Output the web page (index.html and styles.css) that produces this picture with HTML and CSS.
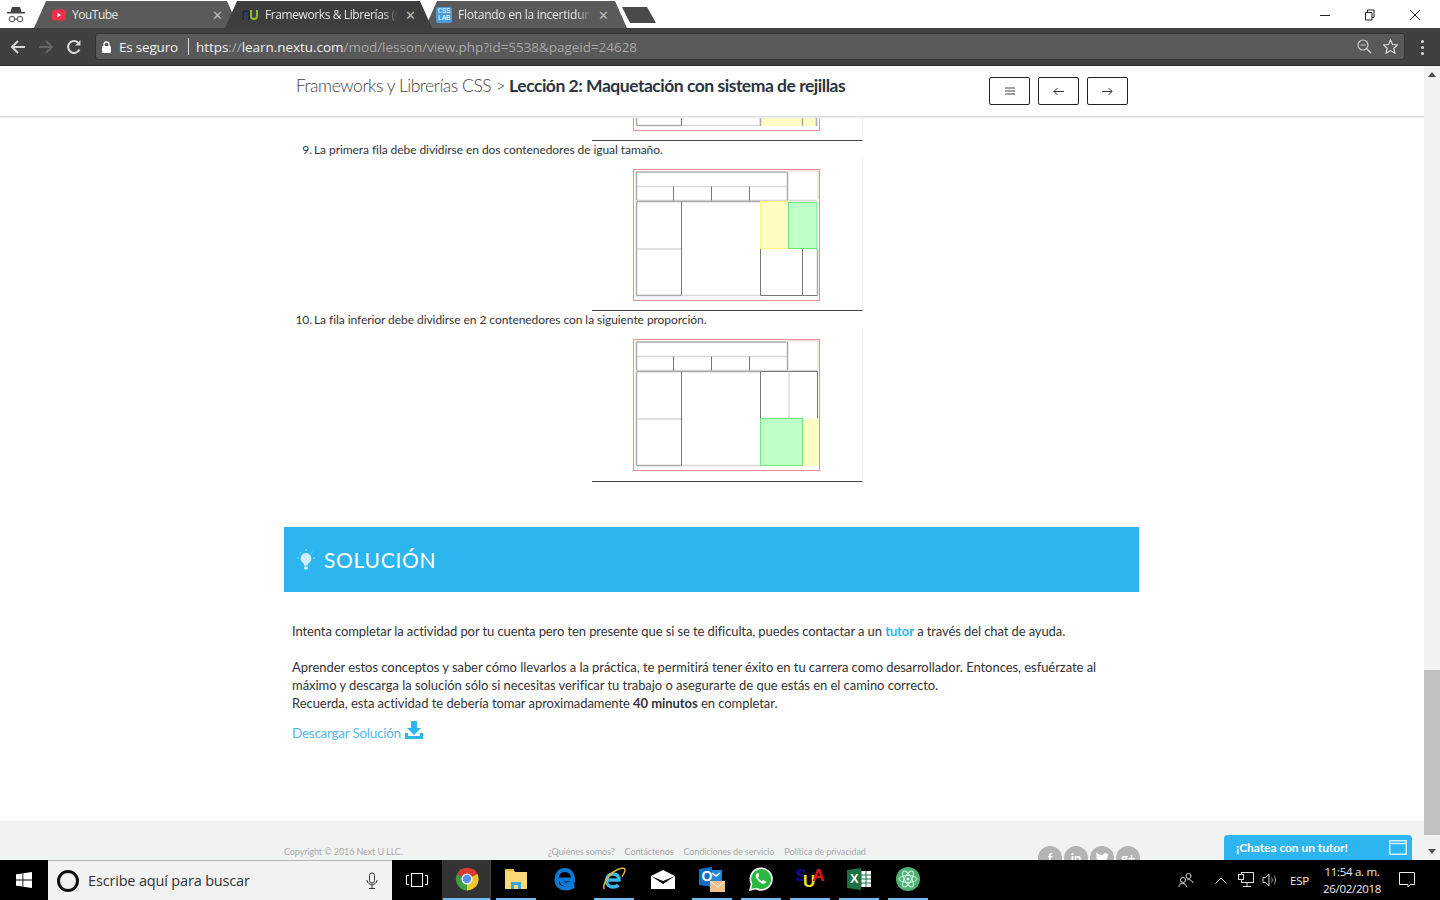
FILE: index.html

```html
<!DOCTYPE html>
<html lang="es">
<head>
  <meta charset="UTF-8" />
  <title>Lección 2: Maquetación con sistema de rejillas</title>
  <link rel="stylesheet" href="styles.css">
</head>
<body>
  <!-- browser: tabs -->
  <div class="tabstrip">
    <svg class="incognito" width="18" height="22" viewBox="0 0 18 22"><path d="M5 3h8l1.500 5h-11z" fill="#444"/><rect x="0" y="8" width="18" height="1.500" fill="#444"/><circle cx="5" cy="15" r="2.800" fill="none" stroke="#444"/><circle cx="13" cy="15" r="2.800" fill="none" stroke="#444"/><path d="M7.800 15h2.400" stroke="#444"/></svg>
    <div class="tab tab-one">
      <svg class="favicon" width="14" height="14" viewBox="0 0 14 14"><rect y="1.500" width="14" height="11" rx="3" fill="#f0304a"/><path d="M5.500 4.800l3.500 2.200-3.500 2.200z" fill="#fff"/></svg>
      <span class="tab-title">YouTube</span>
      <span class="tab-close">✕</span>
    </div>
    <div class="tab tab-two">
      <svg class="favicon" width="18" height="14" viewBox="0 0 18 14"><path d="M2 12V6a3 3 0 0 1 6 0v6" fill="none" stroke="#1d2a55" stroke-width="2"/><path d="M10 2v6a3 3 0 0 0 6 0V2" fill="none" stroke="#8fb82c" stroke-width="2"/></svg>
      <span class="tab-title">Frameworks &amp; Librerías (CSS)</span>
      <span class="tab-close">✕</span>
    </div>
    <div class="tab tab-three">
      <span class="css-lab">CSS<br>LAB</span>
      <span class="tab-title">Flotando en la incertidumbre</span>
      <span class="tab-close">✕</span>
    </div>
    <div class="new-tab"></div>
    <div class="win-controls">
      <span class="win-btn"><svg width="12" height="12"><path d="M1 6.500h10" stroke="#222"/></svg></span>
      <span class="win-btn"><svg width="12" height="12"><path d="M1.500 3.500h6.500v7.500h-6.500zM3.500 3.500v-2.500h6.500v7.500h-2" fill="none" stroke="#222"/></svg></span>
      <span class="win-btn"><svg width="12" height="12"><path d="M1 1l10 10M11 1l-10 10" stroke="#222"/></svg></span>
    </div>
  </div>

  <!-- browser: address bar -->
  <div class="toolbar">
    <svg class="nav-icon" width="16" height="16" viewBox="0 0 16 16"><path d="M15 8H2M8 2L2 8l6 6" fill="none" stroke="#d8d8d8" stroke-width="2"/></svg>
    <svg class="nav-icon" width="16" height="16" viewBox="0 0 16 16"><path d="M1 8h13M8 2l6 6-6 6" fill="none" stroke="#666" stroke-width="2"/></svg>
    <svg class="nav-icon" width="16" height="16" viewBox="0 0 16 16"><path d="M13.500 10.500A6 6 0 1 1 13 4.500" fill="none" stroke="#d8d8d8" stroke-width="2"/><path d="M14.500 1v5.500H9z" fill="#d8d8d8"/></svg>
    <div class="omnibox">
      <svg width="9" height="12" viewBox="0 0 9 12"><path d="M2 5V3.500a2.500 2.500 0 0 1 5 0V5" fill="none" stroke="#fff" stroke-width="1.300"/><rect y="5" width="9" height="7" rx="1" fill="#fff"/></svg>
      <span class="secure">Es seguro</span>
      <span class="omni-sep"></span>
      <span class="url"><b>https</b><i>://</i><b>learn.nextu.com</b>/mod/lesson/view.php?id=5538&amp;pageid=24628</span>
      <svg class="omni-zoom" width="15" height="15" viewBox="0 0 15 15"><circle cx="6" cy="6" r="5" fill="none" stroke="#ccc" stroke-width="1.200"/><path d="M9.500 9.500l4.500 4.500" stroke="#ccc" stroke-width="1.400"/><path d="M3.500 6h5" stroke="#ccc"/></svg>
      <svg width="15" height="15" viewBox="0 0 15 15"><path d="M7.500 1l2 4.500 5 .500-3.700 3.300 1.100 4.900-4.400-2.600-4.400 2.600 1.100-4.900L.5 6l5-.5z" fill="none" stroke="#ddd" stroke-width="1.200"/></svg>
    </div>
    <div class="menu-dots"><i></i><i></i><i></i></div>
  </div>

  <!-- page viewport -->
  <div class="viewport">
    <div class="page">
      <header class="lesson-bar">
        <h1 class="lesson-title"><span class="course">Frameworks y Librerías CSS &gt;</span> <strong>Lección 2: Maquetación con sistema de rejillas</strong></h1>
        <nav class="lesson-nav">
          <button class="nav-btn"><svg width="10" height="8" viewBox="0 0 10 8"><path d="M0 1h10M0 4h10M0 7h10" stroke="#444"/></svg></button>
          <button class="nav-btn"><svg width="11" height="9" viewBox="0 0 11 9"><path d="M11 4.500H1M4.500 1L1 4.500 4.500 8" fill="none" stroke="#333"/></svg></button>
          <button class="nav-btn"><svg width="11" height="9" viewBox="0 0 11 9"><path d="M0 4.500h10M6.500 1L10 4.500 6.500 8" fill="none" stroke="#333"/></svg></button>
        </nav>
      </header>

      <main class="scroller">
        <div class="content">
          <figure class="shot shot-cut">
            <svg width="270" height="23" viewBox="0 129 270 23">
              <rect class="fill-y" x="168" y="90" width="57" height="48"/>
              <use href="#grid"/>
              <path class="ln-mid" d="M210.500 90v48M168.500 90v48M224.500 90v48"/>
            </svg>
          </figure>
          <div class="step"><span class="num">9.</span><span>La primera fila debe dividirse en dos contenedores de igual tamaño.</span></div>
          <figure class="shot">
            <svg width="270" height="152" viewBox="0 0 270 152">
              <defs>
                <g id="grid">
                  <rect class="ln-red" x="41.500" y="11.500" width="186" height="131"/>
                  <path class="ln-pink" d="M195 13h31v28"/>
                  <path class="ln-soft" d="M44.500 28.500h150M44.500 42.500h181M44.500 91h45M89.500 137.500h79"/>
                  <path class="ln-mid" d="M44.500 14h150M44.500 43.500h124M44.500 43.500v94M44.500 137.500h45M195.500 14v28M44.500 14v28"/>
                  <path class="ln-dark" d="M89.500 43.500v94M81.500 28.500v14M119.500 28.500v14M157.500 28.500v14"/>
                </g>
              </defs>
              <use href="#grid"/>
              <rect class="fill-y box-y" x="168.500" y="43.500" width="28" height="47"/>
              <rect class="fill-g box-g" x="196.500" y="44.500" width="28.500" height="46"/>
              <path class="ln-dark" d="M168.500 91v46.500M210.500 91v46.500M168.500 137.500h57"/>
              <path class="ln-mid" d="M225.500 91v46.500"/>
            </svg>
          </figure>
          <div class="step"><span class="num">10.</span><span>La fila inferior debe dividirse en 2 contenedores con la siguiente proporción.</span></div>
          <figure class="shot shot-last">
            <svg width="270" height="153" viewBox="0 0 270 153">
              <use href="#grid"/>
              <path class="ln-dark" d="M168.500 43.500v47M225.500 43.500v47M168.500 43.500h57"/>
              <path class="ln-soft" d="M197 43.500v47"/>
              <rect class="fill-y" x="211" y="91" width="16" height="47"/>
              <rect class="fill-g box-g" x="168.500" y="90.500" width="42" height="47"/>
            </svg>
          </figure>

          <section class="band">
            <svg width="18" height="22" viewBox="0 0 18 22"><path d="M9 4a5.500 5.500 0 0 0-3 10c.8.700 1 1.500 1 2.500h4c0-1 .2-1.800 1-2.500A5.500 5.500 0 0 0 9 4z" fill="#cdeefb"/><rect x="7" y="17.500" width="4" height="3" rx="1" fill="#cdeefb"/><path d="M9 0v2M2.500 3l1.300 1.300M15.500 3l-1.300 1.300M0 9h2M16 9h2" stroke="#9adcf7"/></svg>
            <h2 class="band-title">SOLUCIÓN</h2>
          </section>

          <div class="solution">
            <p class="intro">Intenta completar la actividad por tu cuenta pero ten presente que si se te dificulta, puedes contactar a un <a class="tutor" href="#">tutor</a> a través del chat de ayuda.</p>
            <p>Aprender estos conceptos y saber cómo llevarlos a la práctica, te permitirá tener éxito en tu carrera como desarrollador. Entonces, esfuérzate al<br>máximo y descarga la solución sólo si necesitas verificar tu trabajo o asegurarte de que estás en el camino correcto.<br>Recuerda, esta actividad te debería tomar aproximadamente <strong>40 minutos</strong> en completar.</p>
            <a class="download" href="#">Descargar Solución
              <svg width="18" height="18" viewBox="0 0 18 18"><path d="M6 0h6v7h4l-7 7-7-7h4z" fill="#2cb5ef"/><path d="M0 12h3v3h12v-3h3v6H0z" fill="#2cb5ef"/></svg>
            </a>
          </div>
        </div>

        <footer class="site-footer">
          <span class="copyright">Copyright © 2016 Next U LLC.</span>
          <span class="foot-links">
            <span>¿Quiénes somos?</span><span>Contáctenos</span><span>Condiciones de servicio</span><span>Política de privacidad</span>
          </span>
          <span class="social">
            <span class="soc">f</span><span class="soc">in</span>
            <span class="soc"><svg width="14" height="12" viewBox="0 0 14 12"><path d="M14 1.500l-1.600.5c-1-1.500-3.900-1.300-4.500 1C5 3 3 2 1.500.8.700 2.200 1 3.700 2.300 4.700L1 4.400c0 1.400 1 2.500 2.300 2.800l-1.200.1c.4 1.100 1.400 1.800 2.600 1.900C3.500 10.200 2 10.500.5 10.400 6 13.500 13 10 12.700 3.200z" fill="#fff"/></svg></span>
            <span class="soc">g+</span>
          </span>
        </footer>
      </main>

      <div class="chat-tab">
        <span>¡Chatea con un tutor!</span>
        <svg width="18" height="15" viewBox="0 0 18 15"><rect x=".75" y=".75" width="16.500" height="13.500" fill="none" stroke="#d8f3ff" stroke-width="1.500"/><path d="M1 3.500h16" stroke="#d8f3ff" stroke-width="1.500"/></svg>
      </div>
    </div>

    <div class="scrollbar">
      <span class="sb-arrow sb-up"></span>
      <span class="sb-track"><span class="sb-thumb"></span></span>
      <span class="sb-arrow sb-down"></span>
    </div>
  </div>

  <!-- windows taskbar -->
  <div class="taskbar">
    <div class="start">
      <svg width="16" height="16" viewBox="0 0 16 16"><path d="M0 2.300l6.500-.9v6.200H0zM7.300 1.300L16 0v7.600H7.300zM0 8.400h6.500v6.200L0 13.700zM7.300 8.400H16V16l-8.700-1.300z" fill="#fff"/></svg>
    </div>
    <div class="search">
      <span class="cortana"></span>
      <span class="search-text">Escribe aquí para buscar</span>
      <svg class="mic" width="12" height="18" viewBox="0 0 12 18"><rect x="3.500" y="1" width="5" height="10" rx="2.500" fill="none" stroke="#333"/><path d="M1 8c0 6 10 6 10 0M6 13v3M3 16.500h6" fill="none" stroke="#333"/></svg>
    </div>
    <div class="task-view">
      <svg width="22" height="14" viewBox="0 0 22 14"><rect x="5.500" y=".5" width="11" height="13" fill="none" stroke="#fff"/><path d="M3 2.500H.5v9H3M19 2.500h2.500v9H19" fill="none" stroke="#fff"/></svg>
    </div>
    <div class="apps">
      <span class="app app-current"><span class="app-in on">
        <svg width="24" height="24" viewBox="0 0 24 24"><path d="M12 12L2 7A11.500 11.500 0 0 1 22.500 7z" fill="#d93a30"/><path d="M12 12L22.500 7A11.500 11.500 0 0 1 12 23.500z" fill="#f4c430"/><path d="M12 12v11.500A11.500 11.500 0 0 1 2 7z" fill="#3f9b45"/><circle cx="12" cy="12" r="5.500" fill="#fff"/><circle cx="12" cy="12" r="4.200" fill="#5a8ff0"/></svg>
      </span></span>
      <span class="app"><span class="app-in on">
        <svg width="24" height="22" viewBox="0 0 24 22"><path d="M1 1h8l2 3h12v17H1z" fill="#fbd977"/><rect x="1" y="1" width="9" height="2" fill="#e8b84a"/><path d="M7 21v-7h10v7h-3v-4h-4v4z" fill="#35a7e0"/></svg>
      </span></span>
      <span class="app"><span class="app-in">
        <svg width="22" height="24" viewBox="0 0 22 24"><path d="M3.500 12.500H19c0-6-3-9.500-8-9.500-5.500 0-8.500 4-8.500 9.500 0 6 4 9 9 9 3 0 5.500-.7 7-1.700v-4c-2 1.200-4 1.700-6 1.700-3 0-5-1.500-5-4" fill="none" stroke="#0a78d4" stroke-width="4"/></svg>
      </span></span>
      <span class="app"><span class="app-in on">
        <svg width="24" height="24" viewBox="0 0 24 24"><path d="M5 13h12c0-4-2.500-6-6-6-4 0-6.500 3-6.500 6.500 0 4 3 6.500 6.500 6.500 2.500 0 4.500-1 5.500-2" fill="none" stroke="#3ab7ea" stroke-width="3.500"/><path d="M2.500 22C0 19 5 9 12 4.500 18 1 23 0 23 3c0 2-1 4-3 6.500" fill="none" stroke="#e8b32a" stroke-width="1.500"/></svg>
      </span></span>
      <span class="app"><span class="app-in">
        <svg width="24" height="19" viewBox="0 0 24 19"><path d="M0 6L12 0l12 6v13H0z" fill="#fff"/><path d="M0 6l12 8 12-8-12 5z" fill="#000"/></svg>
      </span></span>
      <span class="app"><span class="app-in on">
        <svg width="26" height="26" viewBox="0 0 26 26"><rect x="11" y="4" width="12" height="12" fill="#1e88d8"/><path d="M13 7l4 3 4-3" fill="none" stroke="#fff" stroke-width="1.500"/><path d="M0 3l13-2v20L0 19z" fill="#0a72c6"/><text x="2.500" y="15" class="ol-text">O</text><rect x="11" y="15" width="15" height="11" fill="#eec18f"/><path d="M11 15l7.500 6 7.500-6" fill="none" stroke="#fff"/></svg>
      </span></span>
      <span class="app"><span class="app-in on">
        <svg width="24" height="24" viewBox="0 0 24 24"><path d="M1 23l1.600-6A10.800 10.800 0 1 1 7 21.500z" fill="#2bb741" stroke="#fff" stroke-width="1.600"/><path d="M8 6.500c-2 1.500-1.500 4 1 7 2.500 2.800 5.500 4 7.500 2.500l.5-1.500-3-1.500-1.200 1.200c-1.500-.6-3-2.200-3.800-3.900l1-1.200L9.500 6z" fill="#fff"/></svg>
      </span></span>
      <span class="app"><span class="app-in on">
        <span class="sua"><span class="sua-s">S</span><span class="sua-u">U</span><span class="sua-a">A</span></span>
      </span></span>
      <span class="app"><span class="app-in on">
        <svg width="24" height="22" viewBox="0 0 24 22"><rect x="10" y="3" width="14" height="16" fill="#fff"/><path d="M14 3v16M19 3v16M10 7h14M10 11h14M10 15h14" stroke="#1e7145"/><path d="M0 2l14-2v22L0 20z" fill="#1e7145"/><text x="3" y="15" class="xl-text">X</text></svg>
      </span></span>
      <span class="app"><span class="app-in on">
        <svg width="24" height="24" viewBox="0 0 24 24"><circle cx="12" cy="12" r="12" fill="#4caf74"/><g fill="none" stroke="#d7f5e2"><ellipse cx="12" cy="12" rx="9" ry="3.500"/><ellipse cx="12" cy="12" rx="9" ry="3.500" transform="rotate(60 12 12)"/><ellipse cx="12" cy="12" rx="9" ry="3.500" transform="rotate(120 12 12)"/></g><circle cx="12" cy="12" r="1.500" fill="#fff"/></svg>
      </span></span>
    </div>
    <div class="tray">
      <svg class="tray-people" width="16" height="16" viewBox="0 0 16 16"><circle cx="10.500" cy="4" r="2.500" fill="none" stroke="#ddd"/><circle cx="5" cy="8" r="2.500" fill="none" stroke="#ddd"/><path d="M1 15c0-5 7-5 7.500 0M9 8c2-1 5 0 6 3" fill="none" stroke="#ddd"/></svg>
      <svg class="tray-up" width="12" height="7" viewBox="0 0 12 7"><path d="M.5 6.500L6 1l5.500 5.500" fill="none" stroke="#eee"/></svg>
      <svg class="tray-net" width="16" height="16" viewBox="0 0 16 16"><rect x="3.500" y=".5" width="12" height="10" fill="none" stroke="#ddd"/><rect x=".5" y="2.500" width="5" height="5" fill="#000" stroke="#ddd"/><path d="M9 11v3M5 14.500h8" stroke="#ddd"/></svg>
      <svg class="tray-vol" width="16" height="16" viewBox="0 0 16 16"><path d="M1 5.500h2.500L7 2v12l-3.500-3.500H1z" fill="none" stroke="#ddd"/><path d="M9.500 5.500c1 1.500 1 3.500 0 5M12 3.500c2 2.500 2 6.500 0 9" fill="none" stroke="#aaa"/></svg>
      <span class="tray-lang">ESP</span>
      <span class="clock"><span>11:54 a. m.</span><span>26/02/2018</span></span>
      <svg class="tray-note" width="16" height="16" viewBox="0 0 16 16"><path d="M.5.500h15v12h-4l-2.500 2.500v-2.500H.5z" fill="none" stroke="#eee"/></svg>
    </div>
  </div>
</body>
</html>
```

FILE: styles.css

```css
* {
  box-sizing: border-box;
}

html,
body {
  margin: 0;
  height: 900px;
  overflow: hidden;
}

body {
  display: flex;
  flex-direction: column;
  font-family: Lato, sans-serif;
  background: #fff;
  color: #333;
}

/* tabs */
.tabstrip {
  display: flex;
  height: 28px;
  padding-top: 1px;
  background: #fff;
  flex: none;
}

.incognito {
  position: relative;
  left: 7px;
  top: 3px;
  flex: none;
  margin-right: 16px;
}

.tab {
  display: flex;
  align-items: center;
  height: 27px;
  padding-left: 18px;
  padding-right: 16px;
  background: #5a5a5a;
  clip-path: polygon(0 100%, 12px 0, calc(100% - 12px) 0, 100% 100%);
  flex: none;
  font-family: "Open Sans", sans-serif;
  font-size: 12px;
  letter-spacing: -.25px;
  color: #e6e6e6;
}

.tab-one {
  width: 205px;
}

.tab-two {
  position: relative;
  z-index: 2;
  width: 207px;
  margin-left: -14px;
  padding-left: 16px;
  background: #3e3e3e;
  letter-spacing: -.4px;
}

.tab-three {
  width: 202px;
  margin-left: -7px;
  padding-left: 11px;
  padding-right: 18px;
}

.favicon {
  flex: none;
  margin-right: 6px;
}

.tab-title {
  flex: 1;
  overflow: hidden;
  white-space: nowrap;
  -webkit-mask-image: linear-gradient(to left, transparent 0, #000 14px);
  mask-image: linear-gradient(to left, transparent 0, #000 14px);
}

.tab-one .tab-title {
  -webkit-mask-image: none;
  mask-image: none;
  letter-spacing: -.5px;
}

.tab-close {
  flex: none;
  width: 12px;
  margin-left: 6px;
  font-size: 13px;
  color: #bbb;
  text-align: center;
}

.css-lab {
  flex: none;
  width: 16px;
  height: 16px;
  margin-right: 6px;
  padding-top: 1px;
  border-radius: 2px;
  background: #4f9bd9;
  font-family: "Liberation Mono", monospace;
  font-size: 7px;
  line-height: 7px;
  letter-spacing: 0;
  color: #fff;
  text-align: center;
}

.new-tab {
  flex: none;
  width: 34px;
  height: 16px;
  margin: 6px 0 0 -5px;
  background: #4a4a4a;
  clip-path: polygon(0 0, 25px 0, 100% 100%, 8px 100%);
}

.win-controls {
  display: flex;
  margin-left: auto;
  padding-right: 3px;
  height: 27px;
}

.win-btn {
  display: flex;
  align-items: center;
  justify-content: center;
  width: 45px;
}

/* address bar */
.toolbar {
  display: flex;
  align-items: flex-start;
  flex: none;
  height: 38px;
  padding-top: 5px;
  background: #404040;
  border-bottom: 1px solid #2b2b2b;
}

.nav-icon {
  flex: none;
  margin: 6px 0 0 10px;
}

.nav-icon:nth-child(2),
.nav-icon:nth-child(3) {
  margin-left: 12px;
}

.omnibox {
  display: flex;
  align-items: center;
  width: 1310px;
  height: 27px;
  margin-left: 13px;
  padding: 0 6px;
  border: 1px solid #333;
  border-radius: 3px;
  background: #595959;
  font-family: "Open Sans", sans-serif;
  font-size: 13.500px;
  color: #a8a8a8;
  white-space: nowrap;
}

.secure {
  margin-left: 8px;
  letter-spacing: -.2px;
  color: #f0f0f0;
}

.omni-sep {
  width: 1px;
  height: 17px;
  margin: 0 7px 0 10px;
  background: #ddd;
}

.url {
  letter-spacing: -.04px;
}

.url b {
  font-weight: 400;
  color: #f0f0f0;
}

.url i {
  font-style: normal;
}

.omni-zoom {
  margin-left: auto;
  margin-right: 11px;
}

.menu-dots {
  display: flex;
  flex-direction: column;
  gap: 3px;
  margin: 7px 0 0 16px;
}

.menu-dots i {
  width: 3px;
  height: 3px;
  border-radius: 50%;
  background: #ddd;
}

/* page */
.viewport {
  display: flex;
  flex: 1;
  min-height: 0;
}

.page {
  position: relative;
  display: flex;
  flex-direction: column;
  width: 1424px;
  background: #fff;
}

.lesson-bar {
  display: flex;
  justify-content: space-between;
  flex: none;
  height: 51px;
  padding: 0 296px;
  background: #fff;
  border-bottom: 1px solid #ddd;
  box-shadow: 0 1px 1px #eee;
  position: relative;
  z-index: 1;
}

.lesson-title {
  margin: 9px 0 0;
  font-size: 17.500px;
  font-weight: 400;
  line-height: 22px;
  letter-spacing: -.48px;
  white-space: nowrap;
}

.course {
  font-weight: 300;
  color: #444;
}

.lesson-title strong {
  font-weight: 700;
  color: #2a3540;
}

.lesson-nav {
  display: flex;
  gap: 8px;
  margin-top: 11px;
}

.nav-btn {
  display: flex;
  align-items: center;
  justify-content: center;
  width: 41px;
  height: 28px;
  padding: 0;
  border: 1px solid #222;
  border-radius: 2px;
  background: #fff;
}

.scroller {
  display: flex;
  flex-direction: column;
  flex: 1;
  min-height: 0;
  overflow: hidden;
}

.content {
  flex: 1;
  width: 855px;
  margin-left: 284px;
}

.shot {
  width: 271px;
  margin: 0 0 0 308px;
  border-bottom: 1px solid #444;
  border-right: 1px solid #f0f0f0;
}

.shot svg {
  display: block;
}

.step {
  display: flex;
  gap: 2px;
  height: 17px;
  font-size: 12px;
  line-height: 17px;
  letter-spacing: -.065px;
  white-space: nowrap;
}

.num {
  width: 28px;
  text-align: right;
}

/* diagram lines */
.ln-red,
.ln-pink,
.ln-soft,
.ln-mid,
.ln-dark {
  fill: none;
}

.ln-red {
  stroke: #f68a92;
}

.ln-pink {
  stroke: #f5dcdc;
  stroke-width: 1.500;
}

.ln-soft {
  stroke: #d8d8d8;
  stroke-width: 1.300;
}

.ln-mid {
  stroke: #aaa;
  stroke-width: 1.500;
}

.ln-dark {
  stroke: #777;
}

.fill-y {
  fill: #fdfdc4;
}

.fill-g {
  fill: #bfffc8;
}

.box-y {
  stroke: #fafa7a;
}

.box-g {
  stroke: #6ee87a;
}

/* solution block */
.band {
  display: flex;
  align-items: center;
  gap: 9px;
  height: 65px;
  margin-top: 45px;
  padding-left: 13px;
  background: #2cb5ef;
}

.band-title {
  margin: 0;
  font-size: 21px;
  font-weight: 400;
  letter-spacing: .7px;
  color: #fff;
}

.solution {
  padding: 30px 8px 0;
  font-size: 13px;
  line-height: 18px;
  letter-spacing: -.05px;
  color: #333;
}

.solution p {
  margin: 0 0 18px;
  white-space: nowrap;
}

.solution .intro {
  letter-spacing: -.1px;
}

.solution p:last-of-type {
  margin-bottom: 9px;
}

.tutor {
  font-weight: 700;
  color: #2cb5ef;
  text-decoration: none;
}

.download {
  display: inline-flex;
  align-items: flex-end;
  gap: 4px;
  font-size: 13.500px;
  letter-spacing: -.25px;
  color: #55b8ef;
  text-decoration: none;
}

.download svg {
  margin-bottom: 3px;
}

.site-footer {
  display: flex;
  flex: none;
  height: 39px;
  padding: 25px 0 0 284px;
  background: #f1f3f2;
  font-size: 9px;
  line-height: 12px;
  letter-spacing: -.1px;
  color: #a6a8a8;
  white-space: nowrap;
}

.copyright {
  width: 264px;
}

.foot-links {
  display: flex;
  gap: 10px;
  width: 490px;
}

.social {
  display: flex;
  gap: 2px;
}

.soc {
  display: flex;
  align-items: center;
  justify-content: center;
  flex: none;
  width: 24px;
  height: 24px;
  border-radius: 50%;
  background: #b4b4b4;
  font-size: 13px;
  font-weight: 700;
  color: #fff;
}

.chat-tab {
  position: absolute;
  left: 1224px;
  bottom: 0;
  display: flex;
  align-items: center;
  justify-content: space-between;
  width: 188px;
  height: 25px;
  padding: 0 5px 0 12px;
  border-radius: 4px 4px 0 0;
  background: #2cb5ef;
  font-size: 12px;
  font-weight: 700;
  letter-spacing: -.05px;
  color: #fff;
}

/* scrollbar */
.scrollbar {
  display: flex;
  flex-direction: column;
  width: 16px;
  background: #f1f1f1;
}

.sb-arrow {
  flex: none;
  width: 0;
  height: 0;
  margin: 6px 4px;
  border-left: 4px solid transparent;
  border-right: 4px solid transparent;
}

.sb-up {
  border-bottom: 5px solid #505050;
}

.sb-down {
  border-top: 5px solid #505050;
}

.sb-track {
  flex: 1;
  display: flex;
  flex-direction: column;
  justify-content: flex-end;
}

.sb-thumb {
  width: 100%;
  height: 165px;
  margin-bottom: 8px;
  background: #c1c1c1;
}

/* taskbar */
.taskbar {
  display: flex;
  flex: none;
  height: 40px;
  background: #000;
}

.start {
  display: flex;
  align-items: center;
  justify-content: center;
  width: 48px;
}

.search {
  display: flex;
  align-items: center;
  width: 344px;
  padding: 0 14px 0 9px;
  border-top: 1px solid #b8b8b8;
  background: #f2f2f2;
}

.cortana {
  width: 22px;
  height: 22px;
  border: 3px solid #111;
  border-radius: 50%;
}

.search-text {
  margin-left: 9px;
  font-family: "Open Sans", sans-serif;
  font-size: 14.500px;
  letter-spacing: -.17px;
  color: #333;
}

.mic {
  margin-left: auto;
}

.task-view {
  display: flex;
  align-items: center;
  justify-content: center;
  width: 50px;
}

.apps {
  display: flex;
}

.app {
  width: 49px;
  height: 40px;
  padding: 0 4px 0 5px;
}

.app-current {
  padding: 0 0 0 1px;
  background: #333;
  border-right: 1px solid #444;
}

.app-in {
  display: flex;
  align-items: center;
  justify-content: center;
  height: 40px;
  border-bottom: 2px solid transparent;
}

.app-in.on {
  border-bottom-color: #76b9ed;
}

.ol-text {
  font-family: "Liberation Sans", sans-serif;
  font-size: 14px;
  font-weight: 700;
  fill: #fff;
}

.xl-text {
  font-family: "Liberation Sans", sans-serif;
  font-size: 13px;
  font-weight: 700;
  fill: #fff;
}

.sua {
  display: flex;
  font-family: "Liberation Sans", sans-serif;
  font-size: 17px;
  font-weight: 700;
  line-height: 20px;
}

.sua-s {
  color: #0a0a96;
}

.sua-u {
  margin: 6px -3px 0 -4px;
  color: #f0e020;
}

.sua-a {
  color: #e8141c;
}

.tray {
  display: flex;
  align-items: center;
  margin-left: auto;
  font-family: "Open Sans", sans-serif;
  color: #eee;
}

.tray-people {
  margin-right: 21px;
}

.tray-up {
  margin-right: 11px;
}

.tray-net {
  margin-right: 8px;
}

.tray-vol {
  margin-right: 12px;
}

.tray-lang {
  margin-right: 14px;
  font-size: 11.500px;
  letter-spacing: -.2px;
}

.clock {
  display: flex;
  flex-direction: column;
  align-items: center;
  margin-right: 18px;
  font-size: 11.500px;
  line-height: 17px;
  letter-spacing: -.3px;
}

.tray-note {
  margin-right: 25px;
}
```
